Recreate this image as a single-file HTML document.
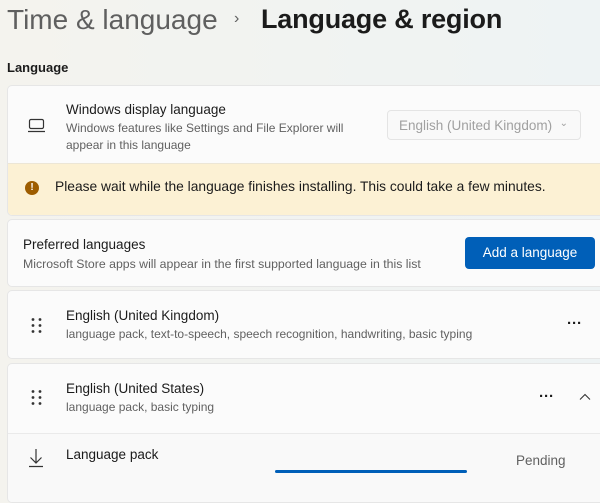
<!DOCTYPE html><html><head><style>
body{margin:0;width:600px;height:489px;overflow:hidden;background:linear-gradient(90deg,#f4f3ee,#eef3f4);font-family:"Liberation Sans",sans-serif;color:#1b1b1b;position:relative}
.a{position:absolute}
.card{position:absolute;left:7px;width:600px;background:#fbfbfb;border:1px solid #e6e6e6;border-radius:5px;box-sizing:border-box}
.t{font-size:13.5px;color:#1b1b1b}
.s{font-size:12px;color:#616161}
.dots{font-size:15px;font-weight:bold;letter-spacing:0px}
</style></head><body>
<div class="a" style="left:7px;top:4px;font-size:28px;color:#5f5f5f">Time &amp; language</div>
<div class="a" style="left:234px;top:10px;font-size:16px;color:#5f5f5f">&#8250;</div>
<div class="a" style="left:261px;top:4px;font-size:27px;font-weight:bold;color:#1b1b1b;letter-spacing:-0.2px">Language &amp; region</div>
<div class="a" style="left:7px;top:60px;font-size:13px;font-weight:bold">Language</div>
<div class="card" style="top:85px;height:131px;overflow:hidden">
 <svg class="a" style="left:19px;top:32px" width="20" height="16"><rect x="2.5" y="1.5" width="14" height="9" rx="1.5" fill="none" stroke="#333" stroke-width="1.2"/><line x1="1" y1="13.5" x2="18" y2="13.5" stroke="#333" stroke-width="1.2"/></svg>
 <div class="a t" style="left:58px;top:16px">Windows display language</div>
 <div class="a s" style="left:58px;top:34px;line-height:17px">Windows features like Settings and File Explorer will<br>appear in this language</div>
 <div class="a" style="left:379px;top:24px;width:194px;height:30px;border:1px solid #e4e4e4;border-radius:4px;background:#f9f9f9;box-sizing:border-box;font-size:13.5px;color:#a0a0a0;padding:7px 0 0 11px">English (United Kingdom) <span style="position:absolute;right:12px;font-size:10px">&#8964;</span></div>
 <div class="a" style="left:0;top:77px;width:600px;height:54px;background:#fcf1d4;border-top:1px solid #ece6d6"></div>
 <div class="a" style="left:17px;top:95px;width:14px;height:14px;border-radius:50%;background:#9d5d00;color:#fff;font-size:10px;font-weight:bold;text-align:center;line-height:14px">!</div>
 <div class="a t" style="left:47px;top:93px;font-size:13.8px">Please wait while the language finishes installing. This could take a few minutes.</div>
</div>
<div class="card" style="top:219px;height:68px">
 <div class="a t" style="left:15px;top:17px">Preferred languages</div>
 <div class="a s" style="left:15px;top:37px;font-size:12.3px">Microsoft Store apps will appear in the first supported language in this list</div>
 <div class="a" style="left:457px;top:17px;width:130px;height:32px;background:#005fb8;border-radius:4px;color:#fff;font-size:13.5px;text-align:center;line-height:32px">Add a language</div>
</div>
<div class="card" style="top:290px;height:69px">
 <div class="a" style="left:23px;top:27px;font-size:0"><svg width="12" height="16"><g fill="#333"><circle cx="2" cy="1.5" r="1.4"/><circle cx="9" cy="1.5" r="1.4"/><circle cx="2" cy="7.5" r="1.4"/><circle cx="9" cy="7.5" r="1.4"/><circle cx="2" cy="13.5" r="1.4"/><circle cx="9" cy="13.5" r="1.4"/></g></svg></div>
 <div class="a t" style="left:58px;top:17px">English (United Kingdom)</div>
 <div class="a s" style="left:58px;top:36px">language pack, text-to-speech, speech recognition, handwriting, basic typing</div>
 <div class="a dots" style="left:559px;top:24px">&middot;&middot;&middot;</div>
</div>
<div class="card" style="top:363px;height:140px;overflow:hidden">
 <div class="a" style="left:23px;top:26px;font-size:0"><svg width="12" height="16"><g fill="#333"><circle cx="2" cy="1.5" r="1.4"/><circle cx="9" cy="1.5" r="1.4"/><circle cx="2" cy="7.5" r="1.4"/><circle cx="9" cy="7.5" r="1.4"/><circle cx="2" cy="13.5" r="1.4"/><circle cx="9" cy="13.5" r="1.4"/></g></svg></div>
 <div class="a t" style="left:58px;top:17px">English (United States)</div>
 <div class="a s" style="left:58px;top:36px">language pack, basic typing</div>
 <div class="a dots" style="left:531px;top:24px">&middot;&middot;&middot;</div>
 <svg class="a" style="left:571px;top:29px" width="12" height="8"><path d="M1 6.5L6 1.5L11 6.5" fill="none" stroke="#333" stroke-width="1.1"/></svg>
 <div class="a" style="left:0;top:69px;width:600px;height:80px;background:#f9f9f9;border-top:1px solid #eaeaea"></div>
 <svg class="a" style="left:18px;top:84px" width="20" height="20"><path d="M10 1V15M4.5 9.5L10 15L15.5 9.5M3 18.5H17" fill="none" stroke="#333" stroke-width="1.2"/></svg>
 <div class="a t" style="left:58px;top:83px">Language pack</div>
 <div class="a" style="left:267px;top:106px;width:192px;height:3px;background:#005fb8;border-radius:2px"></div>
 <div class="a" style="left:508px;top:89px;font-size:13.5px;color:#616161">Pending</div>
</div>
</body></html>
